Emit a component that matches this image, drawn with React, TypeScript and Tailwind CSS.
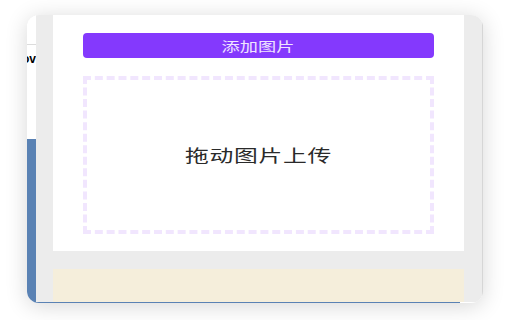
import React from "react";

const cjk = { fontFamily: '"Noto Sans CJK SC", "Noto Sans", sans-serif' };

export default function App() {
  return (
    <div className="w-[512px] h-[320px] bg-white pt-[15px] pl-[27px]">
      {/* 外枠（ブラウザ画面） */}
      <div className="w-[456px] h-[288px] rounded-[12px] overflow-hidden flex flex-col shadow-[0_3px_22px_rgba(0,0,0,0.16)] bg-white">
        <div className="flex flex-1 min-h-0">
          {/* 左側のページ断片 */}
          <div className="w-[9px] flex flex-col shrink-0">
            <div className="h-[124px] bg-white flex flex-col">
              <div className="h-[30px] border-b border-[#dcdcdc]" />
              <div
                className="mt-[8px] text-[12px] font-bold leading-none text-black overflow-hidden whitespace-nowrap flex justify-end"
                style={{ fontFamily: '"Liberation Sans", sans-serif' }}
              >
                ov
              </div>
            </div>
            <div className="flex-1 bg-[#5a82b4]" />
          </div>

          {/* ポップアップ */}
          <div className="flex-1 bg-[#ececec] flex border-r border-[#d6d6d6]">
            <div className="ml-[17px] w-[411px] flex flex-col">
              <div className="h-[236px] bg-white px-[30px] pt-[18px]">
                <button
                  className="w-full h-[25px] rounded-[4px] bg-[#8439fd] text-[#efe4ff] text-[13px] leading-none flex items-center justify-center"
                  style={cjk}
                >
                  <span className="inline-block scale-x-[1.4]">添加图片</span>
                </button>
                <div className="mt-[18px] h-[158px] border-[4px] border-dashed border-[#f1e6fe] flex items-center justify-center">
                  <span
                    className="inline-block scale-x-[1.4] text-[17px] text-[#2a2a2a] tracking-[0.5px]"
                    style={cjk}
                  >
                    拖动图片上传
                  </span>
                </div>
              </div>
              <div className="mt-[18px] h-[33px] bg-[#f5eedb]" />
            </div>
          </div>
        </div>
        <div className="h-[1px] bg-[#5a82b4] mr-[23px]" />
      </div>
    </div>
  );
}
